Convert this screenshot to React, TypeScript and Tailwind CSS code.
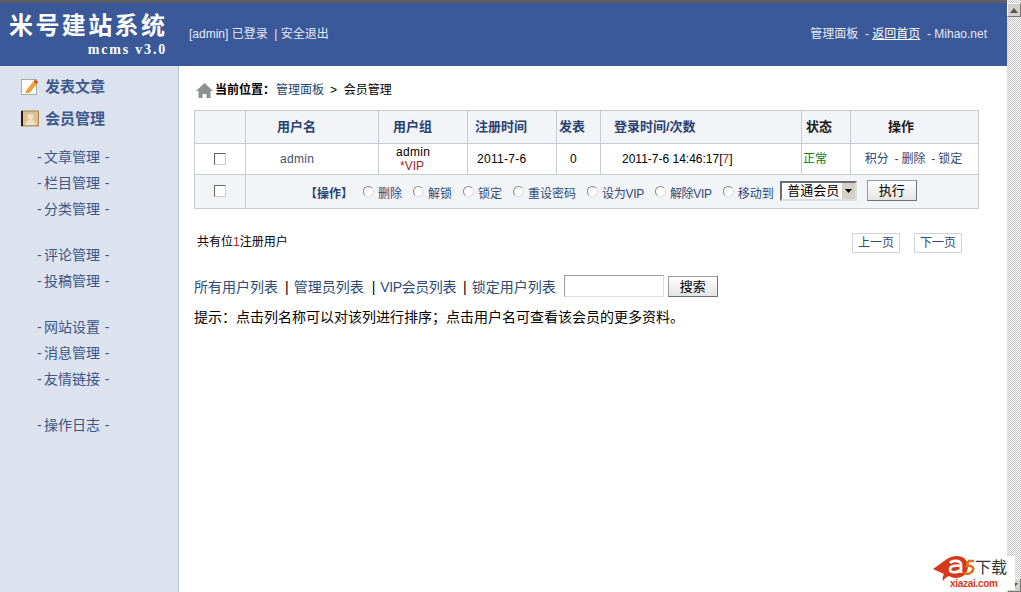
import React from 'react';

const cjk = "font-['Liberation_Sans','Noto_Sans_CJK_SC',sans-serif]";

const menuGroups = [
  ['文章管理', '栏目管理', '分类管理'],
  ['评论管理', '投稿管理'],
  ['网站设置', '消息管理', '友情链接'],
  ['操作日志'],
];

const actions = ['删除', '解锁', '锁定', '重设密码', '设为VIP', '解除VIP', '移动到'];

function Radio() {
  return (
    <span className="inline-block w-[11px] h-[11px] rounded-full border border-[#8a8a8a] border-r-[#ddd] border-b-[#ddd] bg-white mr-1 shrink-0" />
  );
}

function Check() {
  return <span className="block w-[12px] h-[12px] mx-auto -mt-[1px] border border-[#666] border-r-[#ccc] border-b-[#ccc] bg-white" />;
}

function Th({ children, className = '' }: { children?: React.ReactNode; className?: string }) {
  return <th className={`border border-[#c8ccd0] font-bold text-[13px] text-left text-[#2b4270] ${className}`}>{children}</th>;
}

function Td({ children, className = '', colSpan }: { children?: React.ReactNode; className?: string; colSpan?: number }) {
  return <td colSpan={colSpan} className={`border border-[#c8ccd0] text-[12px] font-normal ${className}`}>{children}</td>;
}

function PushButton({ children, className = '' }: { children: React.ReactNode; className?: string }) {
  return (
    <button className={`h-[21px] border border-[#707070] border-t-[#999] border-l-[#999] bg-gradient-to-b from-white to-[#e4e4e4] text-[13px] text-black ${className}`}>
      {children}
    </button>
  );
}

function ScrollArrow({ up }: { up?: boolean }) {
  return (
    <div className="h-[14px] w-[14px] bg-[#d4d0c8] border border-t-white border-l-white border-r-[#777] border-b-[#777] flex items-center justify-center">
      <svg width="8" height="5" viewBox="0 0 8 5">
        <path d={up ? 'M4 0 8 5H0Z' : 'M0 0H8L4 5Z'} fill="#555" />
      </svg>
    </div>
  );
}

export default function App() {
  return (
    <div className={`relative flex w-[1021px] h-[592px] overflow-hidden bg-white ${cjk}`}>
      <div className="flex flex-col w-[1007px] h-full">
        <div className="h-[3px] bg-[#5f5f62]" />
        {/* Header */}
        <header className="h-[63px] bg-[#3b5998] flex items-center text-[12px] text-[#e4e9f3]">
          <div className="w-[178px] pl-[9px] pt-[1px] shrink-0">
            <div className="text-[24px] leading-[26px] font-bold text-white tracking-[2.4px] whitespace-nowrap">米号建站系统</div>
            <div className="text-[14px] leading-[16px] mt-[3px] font-bold text-white text-right pr-[11px] tracking-[1.8px] font-['Liberation_Serif',serif]">mcms v3.0</div>
          </div>
          <div className="ml-[11px] -mt-[1px]">[admin] 已登录&nbsp; | 安全退出</div>
          <div className="ml-auto mr-[20px] -mt-[1px] whitespace-nowrap">
            管理面板&nbsp; - <span className="underline text-white">返回首页</span>&nbsp; - Mihao.net
          </div>
        </header>

        <div className="flex flex-1 min-h-0">
          {/* Sidebar */}
          <aside className="w-[179px] shrink-0 bg-[#dce3ef] border-r border-[#b9c3d3] text-[#3b5587]">
            <div className="pl-[21px] pt-[12px] text-[15px] font-bold text-[#3c5a8e]">
              <div className="flex items-center h-[18px]">
                <svg width="18" height="18" viewBox="0 0 18 18" className="mr-[6px]">
                  <rect x="0.5" y="1.5" width="15" height="15" fill="#fff" stroke="#a9a9a9" />
                  <path d="M6 12 14 2l3 2-8 10-4 1Z" fill="#f0a92e" stroke="#c9762a" strokeWidth="0.6" />
                  <path d="M14 2l3 2-1.4 1.8-3-2Z" fill="#d9502e" />
                </svg>
                发表文章
              </div>
              <div className="flex items-center h-[18px] mt-[14px]">
                <svg width="18" height="18" viewBox="0 0 18 18" className="mr-[6px]">
                  <rect x="0.5" y="1" width="17" height="15" fill="#d9c097" stroke="#a58646" />
                  <rect x="0" y="1" width="2" height="15" fill="#2d1c08" />
                  <circle cx="9.5" cy="7" r="3" fill="#efe0c0" />
                  <path d="M4.5 15c0-4 2-5 5-5s5 1 5 5Z" fill="#efe0c0" />
                </svg>
                会员管理
              </div>
            </div>
            <nav className="mt-[16px] pl-[37px] text-[14px] [word-spacing:-1.5px]">
              {menuGroups.map((group, i) => (
                <div key={i} className="mb-[20px]">
                  {group.map((item) => (
                    <div key={item} className="h-[26px] leading-[26px] whitespace-nowrap">
                      - {item}&nbsp; -
                    </div>
                  ))}
                </div>
              ))}
            </nav>
          </aside>

          {/* Content */}
          <main className="flex-1 pl-[15px] pr-[28px] text-black">
            <div className="flex items-center h-[18px] mt-[15px] text-[12px]">
              <svg width="17" height="15" viewBox="0 0 17 15" className="ml-[2px] mr-[2px]">
                <path d="M8.5 0 17 8h-2.5v7h-4v-4h-4v4h-4V8H0Z" fill="#8f9092" />
              </svg>
              <b className="font-bold">当前位置：</b>
              <span className="text-[#24456f] ml-[1px]">管理面板</span>
              <span className="ml-[6px]">&gt;&nbsp; 会员管理</span>
            </div>

            <table className="mt-[11px] w-[784px] table-fixed border-collapse border border-[#c8ccd0] text-center">
              <colgroup>
                <col className="w-[51px]" />
                <col className="w-[133px]" />
                <col className="w-[89px]" />
                <col className="w-[89px]" />
                <col className="w-[44px]" />
                <col className="w-[201px]" />
                <col className="w-[49px]" />
                <col className="w-[128px]" />
              </colgroup>
              <thead>
                <tr className="h-[33px] bg-[#f2f4f7]">
                  <Th />
                  <Th className="pl-[31px]">用户名</Th>
                  <Th className="pl-[14px]">用户组</Th>
                  <Th className="pl-[7px]">注册时间</Th>
                  <Th className="pl-[2px]">发表</Th>
                  <Th className="pl-[13px] whitespace-nowrap">登录时间/次数</Th>
                  <Th className="!text-[#1c1c1c] pl-[4px]">状态</Th>
                  <Th className="!text-[#1c1c1c] pl-[37px]">操作</Th>
                </tr>
              </thead>
              <tbody>
                <tr className="h-[31px]">
                  <Td><Check /></Td>
                  <Td className="text-[#3f4f6c] text-left pl-[34px] tracking-[0.3px]">admin</Td>
                  <Td className="leading-[14px] text-left pl-[17px] tracking-[0.3px]">
                    admin
                    <div className="text-[#a8232a] pl-[4px] tracking-normal">*VIP</div>
                  </Td>
                  <Td className="text-left pl-[9px] tracking-[0.3px]">2011-7-6</Td>
                  <Td className="text-left pl-[13px]">0</Td>
                  <Td className="text-left pl-[21px] whitespace-nowrap">
                    2011-7-6 14:46:17[<span className="text-[#a8232a]">7</span>]
                  </Td>
                  <Td className="text-[#0f7a12] text-left pl-[1px]">正常</Td>
                  <Td className="text-[#2f4a74] whitespace-nowrap pr-[2px] [word-spacing:-0.4px]">积分&nbsp; - 删除&nbsp; - 锁定</Td>
                </tr>
                <tr className="h-[34px] bg-[#f2f4f7]">
                  <Td><Check /></Td>
                  <Td colSpan={7}>
                    <div className="flex items-center pl-[59px] text-[#2f4a74] whitespace-nowrap">
                      <b className="font-bold text-[#2b4270] mr-[10px] mt-[4px]">【操作】</b>
                      {actions.map((a) => (
                        <span key={a} className={`flex items-center ${a === '移动到' ? 'mr-[6px]' : 'mr-[11px]'} ${a.includes('VIP') ? 'tracking-[-0.3px]' : ''}`}>
                          <Radio />
                          <span className="mt-[4px]">{a}</span>
                        </span>
                      ))}
                      <span className="flex items-center h-[20px] w-[77px] -mt-[1px] border-2 border-[#6b6b6b] border-r-[#ddd] border-b-[#ddd] bg-white text-[13px] text-black pl-[3px] mr-[10px]">
                        <span className="flex-1 leading-[16px]">普通会员</span>
                        <span className="w-[13px] h-[16px] bg-[#d4d0c8] flex items-center justify-center">
                          <svg width="7" height="4" viewBox="0 0 7 4"><path d="M0 0H7L3.5 4Z" fill="#000" /></svg>
                        </span>
                      </span>
                      <PushButton className="w-[50px] -mt-[2px]">执行</PushButton>
                    </div>
                  </Td>
                </tr>
              </tbody>
            </table>

            <div className="flex items-start w-[785px] mt-[24px] text-[12px]">
              <div className="ml-[3px]">共有位<span className="text-[#a8232a]">1</span>注册用户</div>
              <div className="ml-auto flex gap-[14px] mr-[17px]">
                <span className="w-[48px] h-[20px] leading-[18px] border border-[#d0d4d8] text-center text-[#2f4a74]">上一页</span>
                <span className="w-[48px] h-[20px] leading-[18px] border border-[#d0d4d8] text-center text-[#2f4a74]">下一页</span>
              </div>
            </div>

            <div className="flex items-center h-[22px] mt-[22px] text-[14px] text-[#2f4a74] whitespace-nowrap">
              <span className="mt-[2px]">所有用户列表</span>
              <span className="text-black ml-[7px] mr-[5px] mt-[2px]">|</span>
              <span className="mt-[2px]">管理员列表</span>
              <span className="text-black ml-[8px] mr-[5px] mt-[2px]">|</span>
              <span className="tracking-[-0.4px] mt-[2px]">VIP会员列表</span>
              <span className="text-black ml-[7px] mr-[5px] mt-[2px]">|</span>
              <span className="mt-[2px]">锁定用户列表</span>
              <span className="w-[100px] h-[22px] ml-[8px] border border-[#999] border-r-[#ddd] border-b-[#ddd] bg-white" />
              <PushButton className="w-[50px] ml-[4px]">搜索</PushButton>
            </div>
            <p className="mt-[10px] text-[14px] leading-[20px] text-black whitespace-nowrap">
              提示：点击列名称可以对该列进行排序；点击用户名可查看该会员的更多资料。
            </p>
          </main>
        </div>
      </div>

      {/* Scrollbar */}
      <div className="w-[14px] h-full flex flex-col justify-between pt-[3px] bg-[repeating-conic-gradient(#c4c4c4_0_25%,#ffffff_0_50%)] bg-[length:2px_2px]">
        <ScrollArrow up />
        <ScrollArrow />
      </div>

      {/* Watermark */}
      <div className="absolute right-[6px] bottom-[2px] w-[84px] h-[34px] bg-white">
        <svg width="44" height="26" viewBox="0 0 44 26" className="absolute left-[2px] top-0">
          <path d="M0 13 14 3c3-2 6-3 10-3 6 0 11 4 11 10 0 7-5 12-12 12-3 0-5-1-7-2-3 1-5 3-6 5-1-3 0-5 1-7Z" fill="#d6381c" />
          <path d="M17 7c2-3 10-3 11 1v9M28 10c-6-1-11 0-11 3.500s7 4 11 0" fill="none" stroke="#fff" strokeWidth="2.600" />
          <path d="M35 5h6M35 5l-1 5c4-1 7 1 6 4s-5 5-9 3" fill="none" stroke="#e4701e" strokeWidth="2.600" />
        </svg>
        <span className="absolute left-[44px] top-[3px] text-[16px] leading-[18px] text-[#333] whitespace-nowrap">下载</span>
        <span className="absolute left-[19px] top-[22px] text-[10px] leading-[12px] font-bold tracking-[-0.3px] text-[#d6381c] whitespace-nowrap">xiazai.com</span>
      </div>
    </div>
  );
}
